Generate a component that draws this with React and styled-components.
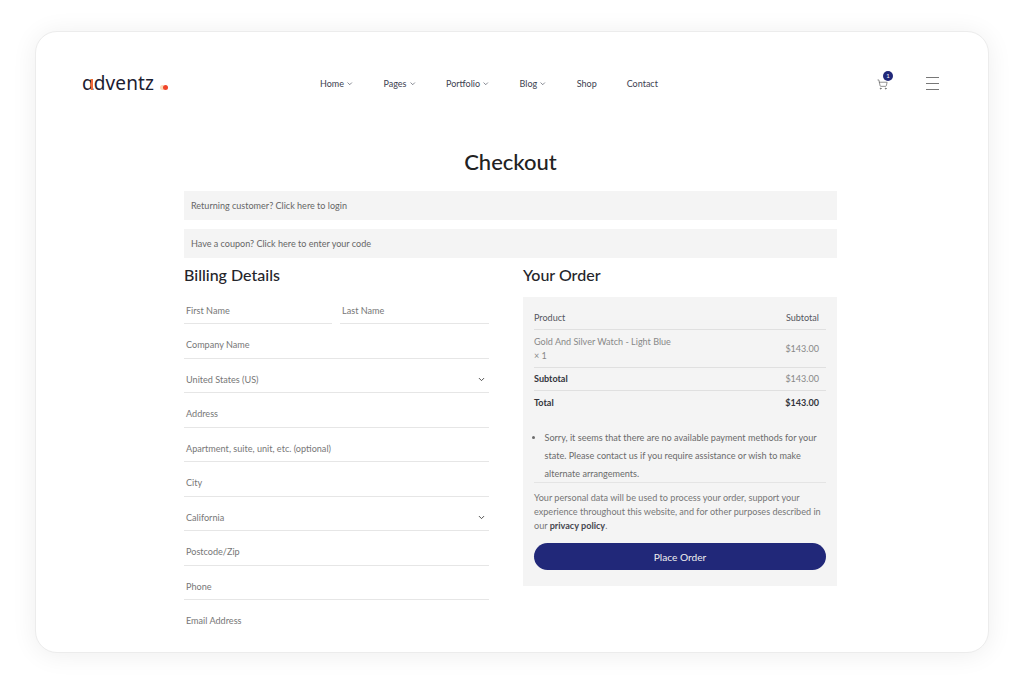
import React from "react";
import styled, { createGlobalStyle } from "styled-components";
import { ChevronDown, ShoppingCart } from "lucide-react";

const GlobalStyle = createGlobalStyle`
  html, body {
    margin: 0;
    padding: 0;
    background: #fff;
    font-family: "Lato", "Noto Sans", sans-serif;
  }
  * { box-sizing: border-box; }
`;

const Page = styled.div`
  width: 1024px;
  height: 691px;
  padding: 31px 35px 38px;
  overflow: hidden;
`;

const Card = styled.div`
  height: 622px;
  background: #fff;
  border: 1px solid #ececec;
  border-radius: 22px;
  box-shadow: 0 2px 26px rgba(0, 0, 0, 0.07);
  overflow: hidden;
`;

const Header = styled.header`
  display: flex;
  align-items: center;
  height: 102px;
  padding: 0 49px 0 46px;
`;

const Logo = styled.a`
  position: relative;
  display: flex;
  align-items: baseline;
  width: 238px;
  font-family: "Noto Sans", sans-serif;
  font-size: 19px;
  line-height: 24px;
  letter-spacing: 0.1px;
  color: #1c2030;
`;

const LogoA = styled.span`
  position: relative;
  &::after {
    content: "";
    position: absolute;
    right: 1px;
    top: 8px;
    width: 2px;
    height: 11px;
    background: #f2683a;
  }
`;

const LogoDot = styled.i`
  width: 5px;
  height: 5px;
  margin-left: 9px;
  border-radius: 50%;
  background: #f0452a;
  box-shadow: -3px 0 0 0 #fbd9b8;
`;

const Nav = styled.nav`
  display: flex;
  align-items: center;
  gap: 30px;
`;

const NavItem = styled.a`
  display: flex;
  align-items: center;
  gap: 2px;
  font-size: 9px;
  font-weight: 400;
  color: #3d4150;
  svg { width: 7.5px; height: 7.5px; margin-top: 1px; }
`;

const Actions = styled.div`
  display: flex;
  align-items: center;
  gap: 38px;
  margin-left: auto;
`;

const CartButton = styled.div`
  position: relative;
  width: 11px;
  height: 11px;
  margin-top: 2px;
  color: #555;
  svg { display: block; width: 11px; height: 11px; }
`;

const CartBadge = styled.span`
  position: absolute;
  top: -8px;
  left: 6px;
  width: 10px;
  height: 10px;
  border-radius: 50%;
  background: #212879;
  color: #fff;
  font-size: 6px;
  line-height: 10px;
  text-align: center;
`;

const Burger = styled.div`
  display: flex;
  flex-direction: column;
  gap: 5px;
  width: 13px;
  span { display: block; height: 1px; background: #777; }
`;

const Main = styled.main`
  width: 653px;
  margin: 0 0 0 148px;
`;

const Title = styled.h1`
  margin: 13px 0 14px;
  font-size: 22px;
  line-height: 30px;
  font-weight: 500;
  text-align: center;
  color: #222;
`;

const Notice = styled.div`
  display: flex;
  align-items: center;
  height: 29px;
  padding: 0 7px;
  background: #f4f4f4;
  font-size: 9.05px;
  color: #666;
  & + & { margin-top: 9px; }
`;

const Columns = styled.div`
  display: grid;
  grid-template-columns: 305px 314px;
  column-gap: 34px;
`;

const SectionTitle = styled.h2`
  margin: 2px 0 0;
  font-size: 16px;
  line-height: 30px;
  font-weight: 500;
  color: #25252b;
`;

const FieldGrid = styled.div`
  display: grid;
  grid-template-columns: 148px 149px;
  column-gap: 8px;
`;

const Field = styled.div`
  grid-column: ${(p) => (p.$half ? "auto" : "1 / -1")};
  display: flex;
  align-items: center;
  justify-content: space-between;
  height: 34.45px;
  padding: 13px 2px 4.4px;
  border-bottom: ${(p) => (p.$last ? "0" : "1px solid #e6e6e6")};
  font-size: 9.1px;
  line-height: 16px;
  color: #777;
  svg { width: 9px; height: 9px; margin-right: 1px; color: #444; }
`;

const OrderPanel = styled.div`
  margin-top: 7px;
  padding: 10px 11px 16px;
  background: #f4f4f4;
`;

const OrderRow = styled.div`
  display: flex;
  align-items: center;
  justify-content: space-between;
  height: ${(p) => p.$h}px;
  padding-right: 7px;
  border-bottom: ${(p) => (p.$plain ? "0" : "1px solid #e0e0e0")};
  font-size: 9.05px;
  line-height: 14px;
  color: ${(p) => (p.$muted ? "#888" : "#55565e")};
  font-weight: ${(p) => (p.$bold ? 700 : 400)};
`;

const Cell = styled.span`
  color: ${(p) => p.$color || "inherit"};
  font-weight: ${(p) => p.$weight || "inherit"};
`;

const PaymentList = styled.ul`
  height: 54px;
  margin: 14px 0 0;
  padding: 0 0 0 10.5px;
  list-style-position: outside;
  border-bottom: 1px solid #e4e4e4;
  font-size: 9.1px;
  line-height: 18px;
  color: #6b6b6b;
`;

const Privacy = styled.p`
  margin: 8px 0 10px;
  font-size: 9.1px;
  line-height: 14px;
  color: #777;
  strong { color: #45464e; font-weight: 700; }
`;

const PlaceOrder = styled.button`
  display: block;
  width: 100%;
  height: 27px;
  padding: 0;
  border: 0;
  border-radius: 14px;
  background: #212879;
  color: #eee;
  font-family: inherit;
  font-size: 10.2px;
`;

const navItems = [
  ["Home", true],
  ["Pages", true],
  ["Portfolio", true],
  ["Blog", true],
  ["Shop", false],
  ["Contact", false],
];

const fields = [
  ["Company Name"],
  ["United States (US)", true],
  ["Address"],
  ["Apartment, suite, unit, etc. (optional)"],
  ["City"],
  ["California", true],
  ["Postcode/Zip"],
  ["Phone"],
];

export default function App() {
  return (
    <Page>
      <GlobalStyle />
      <Card>
        <Header>
          <Logo>
            <LogoA>ɑ</LogoA>dventz
            <LogoDot />
          </Logo>
          <Nav>
            {navItems.map(([label, hasMenu]) => (
              <NavItem key={label}>
                {label}
                {hasMenu && <ChevronDown strokeWidth={2} />}
              </NavItem>
            ))}
          </Nav>
          <Actions>
            <CartButton>
              <ShoppingCart strokeWidth={1.4} />
              <CartBadge>1</CartBadge>
            </CartButton>
            <Burger>
              <span />
              <span />
              <span />
            </Burger>
          </Actions>
        </Header>
        <Main>
          <Title>Checkout</Title>
          <Notice>Returning customer? Click here to login</Notice>
          <Notice>Have a coupon? Click here to enter your code</Notice>
          <Columns>
            <section>
              <SectionTitle>Billing Details</SectionTitle>
              <FieldGrid>
                <Field $half>First Name</Field>
                <Field $half>Last Name</Field>
                {fields.map(([label, isSelect]) => (
                  <Field key={label}>
                    {label}
                    {isSelect && <ChevronDown strokeWidth={2.5} />}
                  </Field>
                ))}
                <Field $last>Email Address</Field>
              </FieldGrid>
            </section>
            <section>
              <SectionTitle>Your Order</SectionTitle>
              <OrderPanel>
                <OrderRow $h={23}>
                  <span>Product</span>
                  <span>Subtotal</span>
                </OrderRow>
                <OrderRow $h={38} $muted>
                  <span>
                    Gold And Silver Watch - Light Blue
                    <br />× 1
                  </span>
                  <span>$143.00</span>
                </OrderRow>
                <OrderRow $h={23} $bold>
                  <Cell $color="#33343c">Subtotal</Cell>
                  <Cell $color="#888" $weight={400}>$143.00</Cell>
                </OrderRow>
                <OrderRow $h={24} $bold $plain>
                  <Cell $color="#33343c">Total</Cell>
                  <Cell $color="#33343c">$143.00</Cell>
                </OrderRow>
                <PaymentList>
                  <li>
                    Sorry, it seems that there are no available payment methods for your state.
                    Please contact us if you require assistance or wish to make alternate
                    arrangements.
                  </li>
                </PaymentList>
                <Privacy>
                  Your personal data will be used to process your order, support your experience
                  throughout this website, and for other purposes described in our{" "}
                  <strong>privacy policy</strong>.
                </Privacy>
                <PlaceOrder>Place Order</PlaceOrder>
              </OrderPanel>
            </section>
          </Columns>
        </Main>
      </Card>
    </Page>
  );
}
